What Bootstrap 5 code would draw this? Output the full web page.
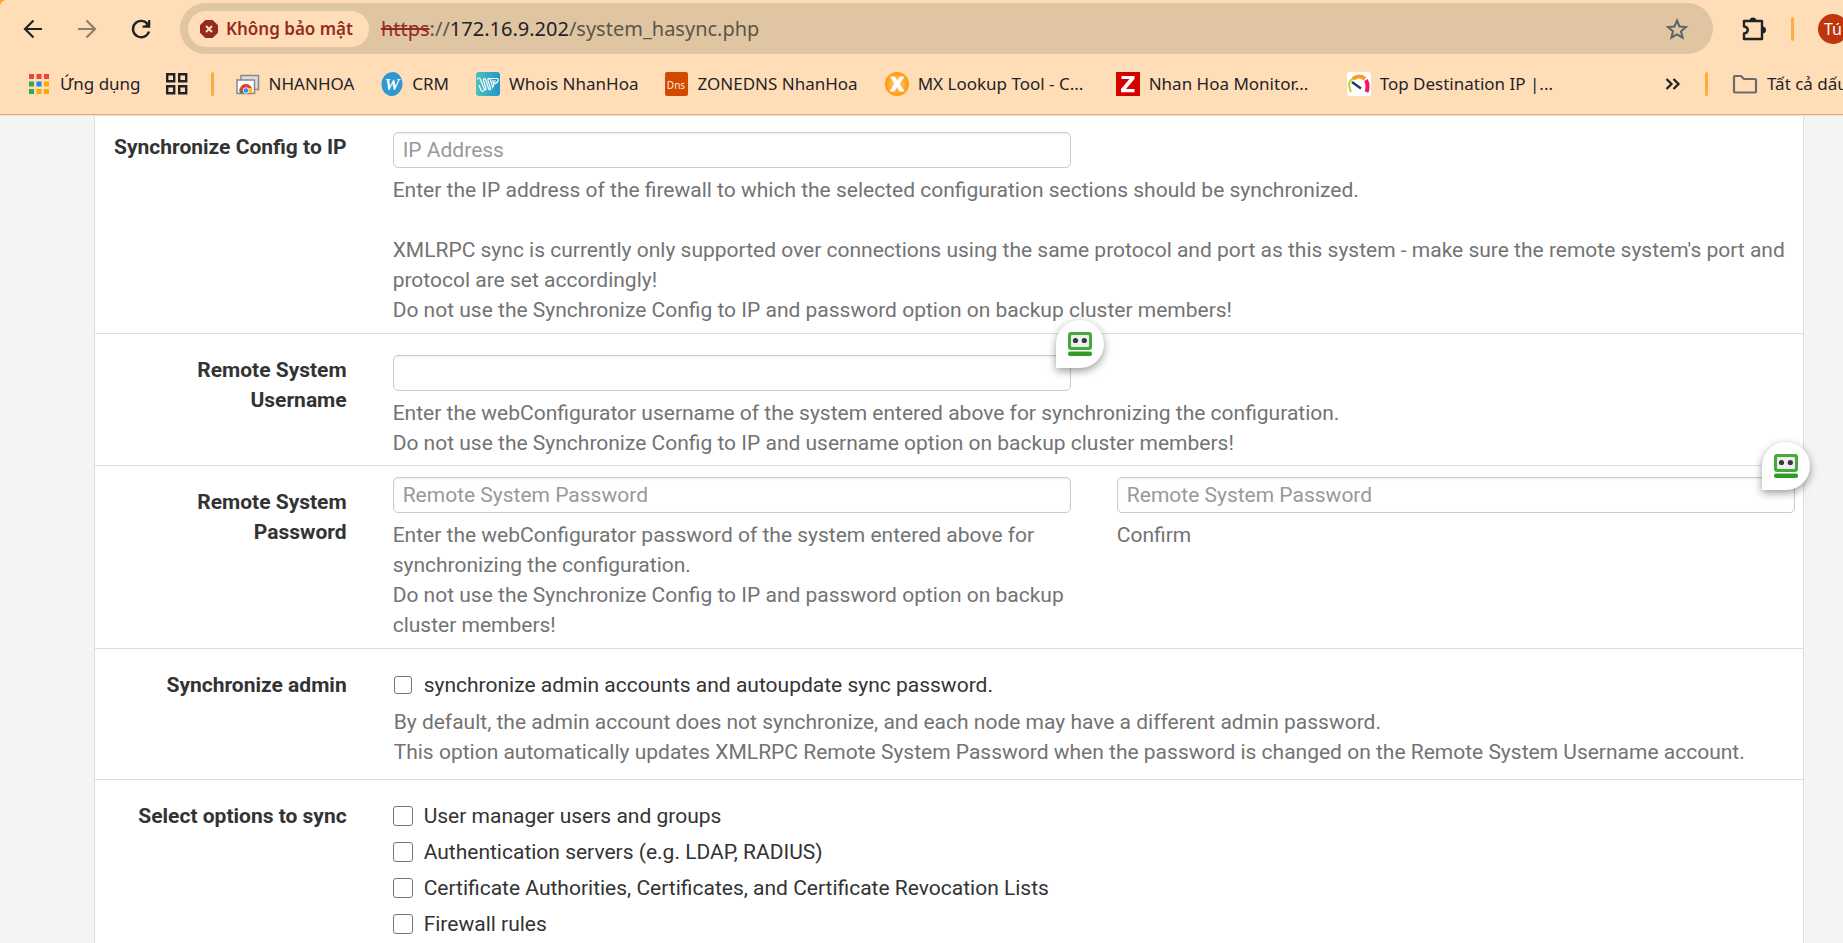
<!DOCTYPE html>
<html lang="vi">
<head>
<meta charset="utf-8">
<meta name="viewport" content="width=device-width, initial-scale=1">
<title>system_hasync.php</title>
<link href="https://cdn.jsdelivr.net/npm/bootstrap@5.3.0/dist/css/bootstrap.min.css" rel="stylesheet">
<style>
body { background: #f4f4f4; font-family: Roboto, "Noto Sans", sans-serif; font-size: 21px; line-height: 30px; color: #333; }
svg { display: block; flex: none; }
/* browser chrome */
.chrome-top { background: #ff9d2b; }
.chrome-in { background: #ffdeb7; border-top-left-radius: 6px; font-family: "Noto Sans", sans-serif; font-size: 17px; line-height: 24px; color: #1f2328; padding-bottom: 1px; }
.chrome-in button, .chrome-in a { flex: none; color: inherit; text-decoration: none; white-space: nowrap; border: 0; background: none; padding: 0; font-size: inherit; }
.toolbar { height: 57px; padding: 3px 0 3px 21px; }
.navs { gap: 30px; width: 159px; flex: none; }
.navs button:disabled { opacity: .5; color: inherit; }
.omni { background: #dfc5a2; border-radius: 26px; height: 51px; padding: 0 24px 0 8px; min-width: 0; }
.chrome-in .chip { background: #ffdeb7; color: #932b24; height: 36px; border-radius: 18px; padding: 0 16px 0 12px; gap: 8px; font-weight: 600; }
.url { font-size: 20px; margin-left: 12px; color: #5d5548; white-space: nowrap; }
.url b { font-weight: 400; color: #1f2328; }
.url del { color: #932b24; }
.tools { width: 130px; flex: none; padding-left: 28px; }
.vbar { width: 3px; height: 24px; border-radius: 2px; background: #ffab40; flex: none; }
.chrome-in .avatar { width: 30px; height: 30px; border-radius: 50%; background: #bf360c; color: #fff; font-size: 16px; margin-left: 24px; }
.marks { height: 58px; padding: 0 0 4px 27px; border-bottom: 1px solid #cdb190; }
.marks a, .marks .apps { gap: 9px; }
.marks .first-bar { margin-left: 22px; }
.links { gap: 27px; margin-left: 22px; min-width: 0; }
.links .cut { width: 204px; }
.allmarks { width: 178px; flex: none; }
/* settings panel */
.page-wrap { padding-left: 94px; padding-right: 39px; }
.panel-box { background: #fff; border: 1px solid #ddd; border-width: 0 1px; }
.form-line { padding: 0 8px 7px; border-bottom: 1px solid #ddd; }
.form-line.pad-end { padding-bottom: 12px; }
.form-line .row { --bs-gutter-x: 46px; }
.lab { text-align: right; font-weight: 700; padding-top: 21px; }
.pt-first { padding-top: 16px; }
.pt-mid { padding-top: 21px; }
.pt-tight { padding-top: 11px; }
.form-line .form-control { height: 36px; padding: 3px 9px; font-size: 21px; line-height: 28px; border: 1px solid #ccc; border-radius: 5px; box-shadow: inset 0 1px 2px rgba(0,0,0,.08); color: #555; }
.form-line .form-control::placeholder { color: #999; }
.help { color: #737373; margin-top: 7px; }
.indent { margin-left: 1px; }
.tick { width: 18px; height: 18px; margin: 0 12px 0 1px; flex: none; appearance: none; background: #fff; border: 1px solid #767676; border-radius: 3px; }
.tick:checked { background: #0075ff; }
.opts label { height: 36px; }
.opts { margin-top: -3px; }
.opts .tick { width: 20px; height: 20px; margin: 0 11px 0 0; }
.fill { position: absolute; width: 48px; height: 48px; top: -35px; padding: 0; border: 0; background: #fff; border-radius: 24px 24px 24px 0; box-shadow: 0 3px 8px rgba(0,0,0,.4); z-index: 2; }
.fill svg { margin: 11px 12px; }
.fill-out { right: -33px; }
.fill-in { right: -15px; }
</style>
</head>
<body class="min-vh-100 d-flex flex-column">
<header class="chrome-top">
<div class="chrome-in overflow-hidden">
  <div class="toolbar d-flex">
    <div class="navs d-flex align-items-center">
      <button aria-label="Back"><svg width="24" height="24" viewBox="0 0 24 24" fill="none" stroke="currentColor" stroke-width="2.2"><path d="M21 12H5M12.500 3.500 4 12l8.500 8.500"/></svg></button>
      <button aria-label="Forward" disabled><svg width="24" height="24" viewBox="0 0 24 24" fill="none" stroke="currentColor" stroke-width="2.200"><path d="M3 12h16M11.500 3.500 20 12l-8.500 8.500"/></svg></button>
      <button aria-label="Reload"><svg width="24" height="24" viewBox="0 0 24 24" fill="none" stroke="currentColor" stroke-width="2.400"><path d="M20 14.500A8.200 8.200 0 1 1 18.300 6.600L20 8.500"/><path d="M20.200 3v6.600h-6.600" stroke-width="2.200"/><path d="M20.500 4v5.500H15z" fill="currentColor" stroke="none"/></svg></button>
    </div>
    <div class="omni flex-grow-1 d-flex align-items-center">
      <button class="chip d-flex align-items-center"><svg width="18" height="18" viewBox="0 0 18 18"><path d="M5.300 0h7.400L18 5.300v7.400L12.700 18H5.300L0 12.700V5.300z" fill="#932b24"/><path d="m6 6 6 6m0-6-6 6" stroke="#ffdeb7" stroke-width="2"/></svg>Không bảo mật</button>
      <div class="url"><del>https</del>://<b>172.16.9.202</b>/system_hasync.php</div>
      <button class="ms-auto" aria-label="Bookmark"><svg width="24" height="24" viewBox="0 0 24 24" fill="none" stroke="#5f6368" stroke-width="2"><path d="m12 3.500 2.500 6 6.500.6-5 4.200 1.600 6.400L12 17.300l-5.600 3.400L8 14.300 3 10.100l6.500-.6z"/></svg></button>
    </div>
    <div class="tools d-flex align-items-center">
      <button aria-label="Extensions"><svg width="26" height="26" viewBox="0 0 26 26"><path d="M4 5h17v18H3v-5.500c5-.500 5-6.500 0-7V5z" fill="none" stroke="currentColor" stroke-width="2.400" stroke-linejoin="round"/><path d="M8.500 5a3.500 3.500 0 0 1 7 0zM21.500 10.500a3.500 3.500 0 0 1 0 7z" fill="currentColor"/></svg></button>
      <span class="vbar ms-4"></span>
      <button class="avatar">Tú</button>
    </div>
  </div>
  <nav class="marks d-flex align-items-center">
    <a href="#" class="apps d-flex align-items-center"><svg width="24" height="24" viewBox="0 0 24 24"><path fill="#f44336" d="M2 2h5v5H2zM9.500 2h5v5h-5zM17 2h5v5h-5z"/><path fill="#34a853" d="M2 9.500h5v5H2zM2 17h5v5H2z"/><path fill="#1e88f5" d="M9.500 9.500h5v5h-5z"/><path fill="#f9ab00" d="M17 9.500h5v5h-5zM9.500 17h5v5h-5zM17 17h5v5h-5z"/></svg>Ứng dụng</a>
    <button class="ms-4" aria-label="Tab groups"><svg width="24" height="24" viewBox="0 0 24 24" fill="none" stroke="currentColor" stroke-width="2.400"><path d="M2.200 2.200h7v7h-7zM14.200 2.200h7v7h-7zM2.200 14.200h7v7h-7zM14.200 14.200h7v7h-7z"/></svg></button>
    <span class="vbar first-bar"></span>
    <div class="links d-flex align-items-center flex-grow-1 overflow-hidden">
      <a href="#" class="d-flex align-items-center"><svg width="24" height="24" viewBox="0 0 24 24"><path d="M5 3.500h17.500v14H5z" fill="#ddd" stroke="#888" stroke-width="1.500"/><path d="M1 8h17.500v13.500H1z" fill="#fff" stroke="#888" stroke-width="1.500"/><path d="M3.500 19a6.500 6.500 0 0 1 12.500-3l-6 1.500-2 4H4z" fill="#db4437"/><path d="M10 16h6.200l.3 4.700H9z" fill="#fbc116"/><path d="M3.300 16.500 7.500 21H4z" fill="#0f9d58"/><circle cx="10" cy="18.500" r="2.800" fill="#4285f4" stroke="#fff" stroke-width=".8"/></svg>NHANHOA</a>
      <a href="#" class="d-flex align-items-center"><svg width="22" height="24" viewBox="0 0 22 24"><ellipse cx="11" cy="12" rx="10.500" ry="12" fill="#2f97d3" transform="rotate(8 11 12)"/><text x="11" y="18" text-anchor="middle" font-family="Liberation Serif" font-weight="700" font-style="italic" font-size="17" fill="#fff">W</text></svg>CRM</a>
      <a href="#" class="d-flex align-items-center"><svg width="24" height="24" viewBox="0 0 24 24"><defs><linearGradient id="g1"><stop stop-color="#4fc0c0"/><stop offset="1" stop-color="#2196c8"/></linearGradient><radialGradient id="g2"><stop stop-color="#ffd27a"/><stop offset="1" stop-color="#ff980d"/></radialGradient></defs><rect width="24" height="24" rx="3" fill="url(#g1)"/><path d="M1.500 7.500c0-2 2.500-2 3 0l3.500 9c.7 2 2.500 2 1.800-.5L7.500 8.500c-.6-2 1.700-2.500 2.300-.5l2.800 8.500c.6 2 2.500 1.500 1.800-.5L12 8.500c-.8-2 1.500-3 2.300-.7l2.400 7.500 2-4.500M14.500 6.500H21c2 0 2 5-3.500 5L16.500 9H20M3 13l2 5c.6 1.600 2.500 1.600 3 .2" fill="none" stroke="#fff" stroke-width="1.200"/></svg>Whois NhanHoa</a>
      <a href="#" class="d-flex align-items-center"><svg width="23" height="24" viewBox="0 0 23 24"><rect width="23" height="24" rx="2" fill="#d14a00"/><text x="11" y="17" text-anchor="middle" font-family="Noto Sans" font-size="10" fill="#ffe9dc">Dns</text></svg>ZONEDNS NhanHoa</a>
      <a href="#" class="cut d-flex align-items-center"><svg width="24" height="24" viewBox="0 0 24 24"><circle cx="12" cy="12" r="12" fill="url(#g2)"/><path d="M5 4.500h5l2.300 4 2.500-4h4.700L14.700 12l5 7.500h-5L12 15l-2.700 4.500h-5l5.200-7.700z" fill="#fff"/></svg>MX Lookup Tool - C...</a>
      <a href="#" class="cut d-flex align-items-center"><svg width="24" height="24" viewBox="0 0 24 24"><path fill="#d40000" d="M0 0h24v24H0z"/><path d="M5.500 4h13v3L10 17h8.500v3.200H5V17l8.500-10h-8z" fill="#fff"/></svg>Nhan Hoa Monitor...</a>
      <a href="#" class="cut d-flex align-items-center"><svg width="24" height="24" viewBox="0 0 24 24" fill="none" stroke-width="3"><rect width="24" height="24" rx="3" fill="#fff"/><path d="M4 20C1 14 2 9 6 6.500" stroke="#b8d433" stroke-width="2"/><path d="M6 7c4-3.500 9-3 12 0" stroke="#ff9a1f" stroke-width="4"/><path d="M19 8c2 4 2 8 .5 12" stroke="#f0136f" stroke-width="4"/><path d="m5 10 9 6.500" stroke="#1b3b6b" stroke-width="2.500"/></svg>Top Destination IP |...</a>
    </div>
    <div class="allmarks d-flex align-items-center">
      <button aria-label="More bookmarks"><svg width="16" height="16" viewBox="0 0 16 16" fill="none" stroke="currentColor" stroke-width="2.300"><path d="m1.500 3 5 5-5 5M8.500 3l5 5-5 5"/></svg></button>
      <span class="vbar ms-4 me-4"></span>
      <a href="#" class="d-flex align-items-center"><svg width="26" height="24" viewBox="0 0 26 24" fill="none" stroke="#6b6b6b" stroke-width="2.200"><path d="M2 5q0-1 1-1h6l3 3h11q1 0 1 1v11.500q0 1-1 1H3q-1 0-1-1z" stroke-linejoin="round"/></svg>Tất cả dấu</a>
    </div>
  </nav>
</div>
</header>
<main class="page-wrap flex-grow-1 d-flex flex-column">
<form class="panel-box flex-grow-1">
  <div class="form-line pb-2">
    <div class="row">
      <label class="col-2 lab pt-first" for="ip">Synchronize Config to IP</label>
      <div class="col-10 pt-first">
        <div class="row"><div class="col-6"><input id="ip" class="form-control" placeholder="IP Address"></div></div>
        <div class="help">Enter the IP address of the firewall to which the selected configuration sections should be synchronized.<br><br>XMLRPC sync is currently only supported over connections using the same protocol and port as this system - make sure the remote system's port and protocol are set accordingly!<br>Do not use the Synchronize Config to IP and password option on backup cluster members!</div>
      </div>
    </div>
  </div>
  <div class="form-line">
    <div class="row">
      <label class="col-2 lab" for="user">Remote System Username</label>
      <div class="col-10 pt-mid">
        <div class="row"><div class="col-6"><div class="position-relative"><input id="user" class="form-control"><button type="button" class="fill fill-out" aria-label="Fill form"><svg width="24" height="24" viewBox="0 0 24 24"><rect width="24" height="18" rx="3" fill="#43ab3a"/><rect x="3" y="3" width="18" height="12" rx="1" fill="#eee"/><circle cx="7.500" cy="8.500" r="2.600" fill="#36393f"/><circle cx="16.300" cy="8.500" r="2.600" fill="#36393f"/><rect y="19.500" width="24" height="4.500" rx="2" fill="#309c28"/></svg></button></div></div></div>
        <div class="help">Enter the webConfigurator username of the system entered above for synchronizing the configuration.<br>Do not use the Synchronize Config to IP and username option on backup cluster members!</div>
      </div>
    </div>
  </div>
  <div class="form-line pb-2">
    <div class="row">
      <label class="col-2 lab" for="pw">Remote System Password</label>
      <div class="col-5 pt-tight">
        <input id="pw" type="password" class="form-control" placeholder="Remote System Password">
        <div class="help">Enter the webConfigurator password of the system entered above for synchronizing the configuration.<br>Do not use the Synchronize Config to IP and password option on backup cluster members!</div>
      </div>
      <div class="col-5 pt-tight">
        <div class="position-relative"><input id="pw2" type="password" class="form-control" placeholder="Remote System Password"><button type="button" class="fill fill-in" aria-label="Fill form"><svg width="24" height="24" viewBox="0 0 24 24"><rect width="24" height="18" rx="3" fill="#43ab3a"/><rect x="3" y="3" width="18" height="12" rx="1" fill="#eee"/><circle cx="7.500" cy="8.500" r="2.600" fill="#36393f"/><circle cx="16.300" cy="8.500" r="2.600" fill="#36393f"/><rect y="19.500" width="24" height="4.500" rx="2" fill="#309c28"/></svg></button></div>
        <label class="help d-block" for="pw2">Confirm</label>
      </div>
    </div>
  </div>
  <div class="form-line pad-end">
    <div class="row">
      <div class="col-2 lab">Synchronize admin</div>
      <div class="col-10 pt-mid">
        <label class="d-flex align-items-center"><input type="checkbox" class="tick">synchronize admin accounts and autoupdate sync password.</label>
        <div class="help indent">By default, the admin account does not synchronize, and each node may have a different admin password.<br>This option automatically updates XMLRPC Remote System Password when the password is changed on the Remote System Username account.</div>
      </div>
    </div>
  </div>
  <div class="form-line border-0 pb-0">
    <div class="row">
      <div class="col-2 lab">Select options to sync</div>
      <div class="col-10 pt-mid">
        <div class="opts">
          <label class="d-flex align-items-center"><input type="checkbox" class="tick">User manager users and groups</label>
          <label class="d-flex align-items-center"><input type="checkbox" class="tick">Authentication servers (e.g. LDAP, RADIUS)</label>
          <label class="d-flex align-items-center"><input type="checkbox" class="tick">Certificate Authorities, Certificates, and Certificate Revocation Lists</label>
          <label class="d-flex align-items-center"><input type="checkbox" class="tick">Firewall rules</label>
        </div>
      </div>
    </div>
  </div>
</form>
</main>
<script src="https://cdn.jsdelivr.net/npm/bootstrap@5.3.0/dist/js/bootstrap.bundle.min.js"></script>
</body>
</html>
